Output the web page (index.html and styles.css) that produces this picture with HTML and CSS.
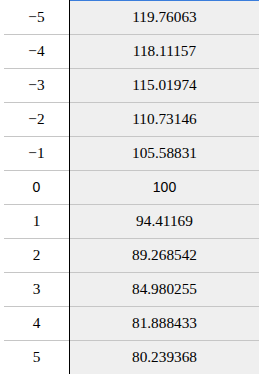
FILE: index.html
```html
<!DOCTYPE html>
<html>
<head>
<meta charset="utf-8">
<link rel="stylesheet" href="styles.css">
</head>
<body>
<div class="table">
  <div class="col col-x">
    <div class="cell">−5</div>
    <div class="cell">−4</div>
    <div class="cell">−3</div>
    <div class="cell">−2</div>
    <div class="cell">−1</div>
    <div class="cell sans">0</div>
    <div class="cell">1</div>
    <div class="cell">2</div>
    <div class="cell">3</div>
    <div class="cell">4</div>
    <div class="cell">5</div>
  </div>
  <div class="col col-y">
    <div class="cell">119.76063</div>
    <div class="cell">118.11157</div>
    <div class="cell">115.01974</div>
    <div class="cell">110.73146</div>
    <div class="cell">105.58831</div>
    <div class="cell sans">100</div>
    <div class="cell">94.41169</div>
    <div class="cell">89.268542</div>
    <div class="cell">84.980255</div>
    <div class="cell">81.888433</div>
    <div class="cell">80.239368</div>
  </div>
</div>
</body>
</html>
```
FILE: styles.css
```css
html, body {
  margin: 0;
  padding: 0;
  background: #ffffff;
}
body {
  width: 259px;
  height: 374px;
  overflow: hidden;
}
.table {
  display: flex;
  font-family: "Liberation Serif", "Times New Roman", serif;
  font-size: 15.3px;
  color: #000000;
}
.col {
  display: flex;
  flex-direction: column;
}
.col-x {
  margin-left: 4px;
  width: 65px;
  padding-top: 1px;
  border-right: 1px solid #000000;
  background: #ffffff;
}
.col-y {
  flex: 1;
  background: #efefef;
  border-top: 1px solid #3a7ddb;
}
.cell {
  box-sizing: border-box;
  height: 34px;
  border-bottom: 1px solid #c6c6c6;
  display: flex;
  align-items: center;
  justify-content: center;
  padding-bottom: 2px;
}
.sans {
  font-family: "Liberation Sans", Arial, sans-serif;
  font-size: 14px;
}
```
